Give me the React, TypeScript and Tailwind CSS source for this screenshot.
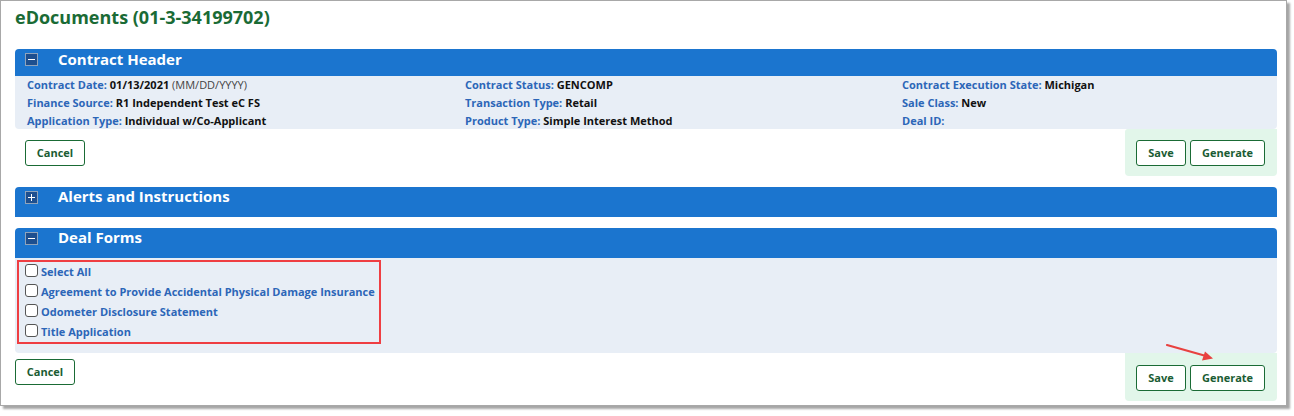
import React from "react";

const font = { fontFamily: '"Open Sans", "Noto Sans", sans-serif' };

function ToggleBox({ plus }: { plus?: boolean }) {
  return (
    <div className="relative w-[13px] h-[13px] bg-[#1d4f8f] border border-[#8fa3bb] shrink-0">
      <div className="absolute left-[2px] right-[2px] top-[5px] h-[1px] bg-white" />
      {plus && <div className="absolute top-[2px] bottom-[2px] left-[5px] w-[1px] bg-white" />}
    </div>
  );
}

function Bar({ title, plus, h, ty }: { title: string; plus?: boolean; h: string; ty: string }) {
  return (
    <div className={`bg-[#1b75cf] rounded-t-[4px] flex items-start pl-[10px] ${h}`}>
      <div className="pt-[4px]">
        <ToggleBox plus={plus} />
      </div>
      <div className={`ml-[20px] text-white font-bold text-[15px] leading-[22px] ${ty}`}>{title}</div>
    </div>
  );
}

function Field({ label, value, extra }: { label: string; value: string; extra?: string }) {
  return (
    <div className="text-[11px] leading-[18px] font-bold whitespace-nowrap">
      <span className="text-[#2c66b8]">{label}</span>{" "}
      <span className="text-[#111]">{value}</span>
      {extra && <span className="text-[#444] font-normal"> {extra}</span>}
    </div>
  );
}

function Btn({ children, w }: { children: React.ReactNode; w: string }) {
  return (
    <div
      className={`h-[26px] ${w} border border-[#1a6b35] rounded-[3px] bg-white flex items-center justify-center text-[11px] font-bold text-[#1a5c33]`}
    >
      {children}
    </div>
  );
}

function Check({ label }: { label: string }) {
  return (
    <div className="flex items-center h-[20px]">
      <div className="w-[13px] h-[13px] border border-[#555] rounded-[3px] bg-white ml-[6px] mr-[3px] -mt-[3px] shrink-0" />
      <span className="text-[11px] font-bold text-[#2c66b8] leading-[20px] whitespace-nowrap">{label}</span>
    </div>
  );
}

export default function App() {
  return (
    <div className="w-[1294px] h-[416px] bg-white relative" style={font}>
      <div className="w-[1287px] h-[406px] border border-[#a8a8a8] bg-white shadow-[3px_3px_2px_rgba(0,0,0,0.35)] pl-[14px] pr-[9px] flex flex-col">
        <div className="pt-[4px] h-[48px] text-[18px] leading-[24px] font-bold text-[#1a6b35]">
          eDocuments (01-3-34199702)
        </div>

        {/* Contract Header */}
        <Bar title="Contract Header" h="h-[27px]" ty="-mt-[1px]" />
        <div className="bg-[#e8eef6] h-[53px] rounded-b-[4px] pl-[12px] grid grid-cols-[438px_437px_1fr]">
          <div className="flex flex-col">
            <Field label="Contract Date:" value="01/13/2021" extra="(MM/DD/YYYY)" />
            <Field label="Finance Source:" value="R1 Independent Test eC FS" />
            <Field label="Application Type:" value="Individual w/Co-Applicant" />
          </div>
          <div className="flex flex-col">
            <Field label="Contract Status:" value="GENCOMP" />
            <Field label="Transaction Type:" value="Retail" />
            <Field label="Product Type:" value="Simple Interest Method" />
          </div>
          <div className="flex flex-col">
            <Field label="Contract Execution State:" value="Michigan" />
            <Field label="Sale Class:" value="New" />
            <Field label="Deal ID:" value="" />
          </div>
        </div>
        <div className="flex justify-between h-[47px]">
          <div className="pt-[11px] pl-[10px]">
            <Btn w="w-[60px]">Cancel</Btn>
          </div>
          <div className="w-[152px] bg-[#e2f6ea] rounded-b-[4px] rounded-tl-[3px] flex gap-[4px] pl-[11px] pt-[11px]">
            <Btn w="w-[50px]">Save</Btn>
            <Btn w="w-[75px]">Generate</Btn>
          </div>
        </div>

        {/* Alerts */}
        <div className="mt-[11px]">
          <Bar title="Alerts and Instructions" plus h="h-[30px]" ty="-mt-[2px]" />
        </div>

        {/* Deal Forms */}
        <div className="mt-[11px]">
          <Bar title="Deal Forms" h="h-[30px]" ty="-mt-[2px]" />
        </div>
        <div className="bg-[#e8eef6] h-[95px] rounded-b-[4px] pl-[2px] pt-[2px]">
          <div className="w-[364px] h-[84px] border-2 border-[#ef3e42] flex flex-col pt-[0px]">
            <Check label="Select All" />
            <Check label="Agreement to Provide Accidental Physical Damage Insurance" />
            <Check label="Odometer Disclosure Statement" />
            <Check label="Title Application" />
          </div>
        </div>
        <div className="flex justify-between h-[48px]">
          <div className="pt-[6px]">
            <Btn w="w-[60px]">Cancel</Btn>
          </div>
          <div className="w-[152px] bg-[#e2f6ea] rounded-b-[4px] flex gap-[4px] pl-[11px] pt-[12px]">
            <Btn w="w-[50px]">Save</Btn>
            <Btn w="w-[75px]">Generate</Btn>
          </div>
        </div>
      </div>

      <svg className="absolute left-[1160px] top-[338px]" width="60" height="26" viewBox="0 0 60 26">
        <line x1="7" y1="7" x2="46" y2="18" stroke="#e8413f" strokeWidth="2.2" strokeLinecap="round" />
        <polygon points="53,20.5 42,22.5 45,13.5" fill="#e8413f" />
      </svg>
    </div>
  );
}
